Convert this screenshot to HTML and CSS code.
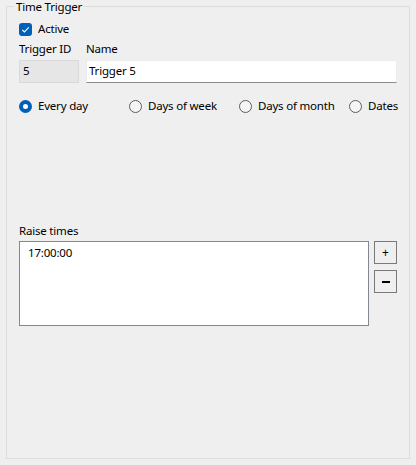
FILE: index.html
```html
<!DOCTYPE html>
<html>
<head>
<meta charset="utf-8">
<link rel="stylesheet" href="styles.css">
</head>
<body>
<div class="group">
  <span class="group-title">Time Trigger</span>
  <label class="check-row">
    <span class="checkbox"><svg width="13" height="13" viewBox="0 0 13 13"><path d="M3.3 6.8 L5.4 8.9 L9.8 4.3" fill="none" stroke="#fff" stroke-width="1.1"/></svg></span>
    <span>Active</span>
  </label>
  <div class="id-grid">
    <div class="field-label">Trigger ID</div>
    <div class="field-label">Name</div>
    <div class="id-box">5</div>
    <div class="text-box">Trigger 5</div>
  </div>
  <div class="radio-row">
    <label class="radio-opt"><span class="radio checked"></span>Every day</label>
    <label class="radio-opt"><span class="radio"></span>Days of week</label>
    <label class="radio-opt"><span class="radio"></span>Days of month</label>
    <label class="radio-opt"><span class="radio"></span>Dates</label>
  </div>
  <div class="times-label">Raise times</div>
  <div class="times-row">
    <div class="list">
      <div class="list-item">17:00:00</div>
    </div>
    <div class="buttons">
      <button class="btn btn-plus">+</button>
      <button class="btn btn-minus"><span class="minus-bar"></span></button>
    </div>
  </div>
</div>
</body>
</html>
```
FILE: styles.css
```css
html, body {
  margin: 0;
  padding: 0;
  background: #efefef;
}
body {
  font-family: "Noto Sans", "Open Sans", sans-serif;
  font-size: 11.5px;
  letter-spacing: -0.2px;
  line-height: 16px;
  color: #000;
  height: 465px;
  padding: 6px;
  box-sizing: border-box;
}
.group {
  position: relative;
  box-sizing: border-box;
  height: 453px;
  width: 404px;
  border: 1px solid #dcdcdc;
  padding: 15px 11px 0 12px;
}
.group-title {
  position: absolute;
  top: -6px;
  left: 7px;
  padding: 0 2px;
  background: #efefef;
  line-height: 12px;
}
.check-row {
  display: flex;
  align-items: center;
  gap: 6px;
  height: 14px;
}
.checkbox {
  width: 13px;
  height: 13px;
  border-radius: 3px;
  background: #005fb8;
  display: block;
}
.checkbox svg { display: block; }
.id-grid {
  margin-top: 5px;
  display: grid;
  grid-template-columns: 60px 311px;
  column-gap: 7px;
  row-gap: 3px;
}
.field-label {
  line-height: 16px;
}
.id-box {
  box-sizing: border-box;
  height: 23px;
  background: #e6e6e6;
  border: 1px solid #d9d9d9;
  padding: 2px 0 0 3px;
}
.text-box {
  box-sizing: border-box;
  height: 23px;
  background: #fff;
  border: 1px solid #ececec;
  border-bottom-color: #8a8a8a;
  padding: 2px 0 0 2px;
}
.radio-row {
  margin-top: 15px;
  display: grid;
  grid-template-columns: repeat(3, 110px) auto;
  height: 16px;
}
.radio-opt {
  display: flex;
  align-items: center;
  gap: 6px;
}
.radio {
  box-sizing: border-box;
  width: 13px;
  height: 13px;
  border-radius: 50%;
  border: 1px solid #5d5d5d;
  background: #f5f5f5;
  flex: none;
}
.radio.checked {
  border: 4px solid #005fb8;
  background: #fff;
}
.times-label {
  margin-top: 109px;
  line-height: 16px;
}
.times-row {
  margin-top: 2px;
  display: flex;
  gap: 5px;
}
.list {
  box-sizing: border-box;
  width: 350px;
  height: 85px;
  background: #fff;
  border: 1px solid #828790;
  padding: 3px 0 0 8px;
}
.buttons {
  display: flex;
  flex-direction: column;
  gap: 6px;
}
.btn {
  box-sizing: border-box;
  width: 23px;
  height: 23px;
  border: 1px solid #7a7a7a;
  background: #efefef;
  padding: 0;
  margin: 0;
  font-family: "Noto Sans", sans-serif;
  font-size: 12px;
  line-height: 1;
  color: #000;
  display: flex;
  align-items: center;
  justify-content: center;
}
.minus-bar {
  display: block;
  width: 8px;
  height: 2px;
  background: #000;
}
```
